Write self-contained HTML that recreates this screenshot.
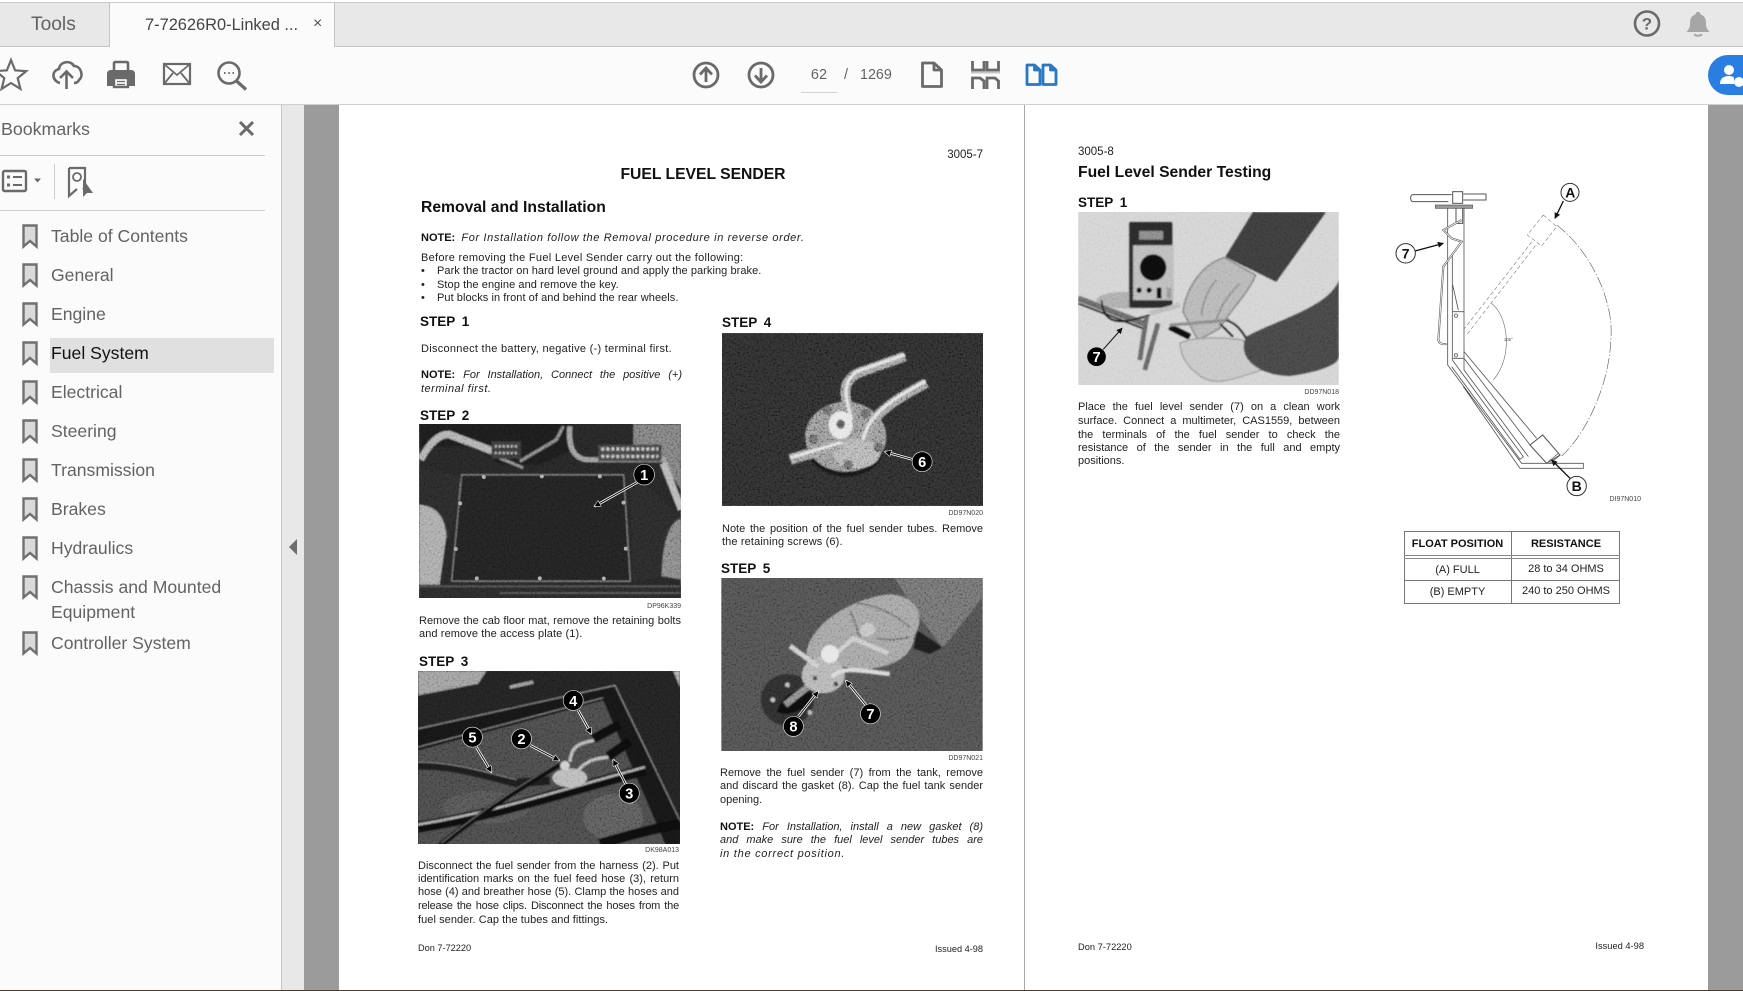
<!DOCTYPE html>
<html><head><meta charset="utf-8"><style>
html,body{margin:0;padding:0;background:#fff}
#r{position:relative;width:1743px;height:991px;overflow:hidden;background:#fff;font-family:"Liberation Sans",sans-serif}
.a{position:absolute}
.u{position:absolute;white-space:nowrap;font-family:"Liberation Sans",sans-serif;color:#636363;line-height:24px;font-size:17.6px}
.t{position:absolute;white-space:nowrap;font-size:11px;line-height:14px;color:#222;margin-top:1px}
.j{text-align:justify;text-align-last:justify;white-space:normal}
.r{text-align:right}
.h{font-weight:bold;color:#111;font-size:15.7px;line-height:20px}
.s{font-weight:bold;color:#111;font-size:13.5px;line-height:16px;word-spacing:3px}
.t.l{font-size:7px;line-height:9px;color:#444;text-align:right;margin-top:0}
.i{font-style:italic}
b{color:#111}
svg{position:absolute;overflow:visible}
svg.ph{overflow:hidden}
svg text{font-family:"Liberation Sans",sans-serif}
.c{font-size:44px;font-weight:bold;fill:#fff;text-anchor:middle}
</style></head><body><div id="r">

<svg width="0" height="0" style="left:0;top:0"><defs>
<filter id="n" x="0" y="0" width="100%" height="100%"><feTurbulence type="fractalNoise" baseFrequency=".18" numOctaves="2" seed="4"/><feColorMatrix values="1.6 1.6 0 0 -1.1 1.6 1.6 0 0 -1.1 1.6 1.6 0 0 -1.1 0 0 0 0 1"/></filter>
<filter id="b"><feGaussianBlur stdDeviation="2.500"/></filter>
<marker id="m" viewBox="0 0 10 10" refX="9" refY="5" markerWidth="26" markerHeight="20" markerUnits="userSpaceOnUse" orient="auto"><path d="M0,0L10,5L0,10z" fill="#000" stroke="#fff" stroke-width=".8"/></marker>
<marker id="k" viewBox="0 0 10 10" refX="9" refY="5" markerWidth="26" markerHeight="18" markerUnits="userSpaceOnUse" orient="auto"><path d="M0,0L10,5L0,10z" fill="#111"/></marker>
</defs></svg>

<!-- top chrome -->
<div class="a" style="left:0;top:2px;width:1743px;height:45px;background:#e8e8e8;border-top:1px solid #c9c9c9;box-sizing:border-box;border-bottom:1px solid #c4c4c4"></div>
<div class="a" style="left:109px;top:3px;width:226px;height:44px;background:#fbfbfb;border-left:1px solid #c4c4c4;border-right:1px solid #c4c4c4;box-sizing:border-box"></div>
<div class="u" style="left:31px;top:13px;font-size:19.200px">Tools</div>
<div class="u" style="left:145px;top:13px;font-size:16.400px;color:#444">7-72626R0-Linked ...</div>
<div class="u" style="left:313px;top:12px;font-size:16px;color:#555">×</div>
<div class="a" style="left:0;top:47px;width:1743px;height:57px;background:#fbfbfb"></div>
<div class="a" style="left:0;top:104px;width:1743px;height:1px;background:#cfcfcf"></div>

<svg style="left:0;top:0" width="1743" height="104" fill="none" stroke="#6a6a6a" stroke-width="2.2">
<path d="M11,60L15.1,70.3L26.2,71.1L17.7,78.2L20.4,88.9L11,83L1.6,88.9L4.3,78.2L-4.2,71.1L6.9,70.3Z"/>
<path d="M60,83C52,81 51,71 59,69C60,61 71,60 74,66C81,66 84,76 79,80C78,82 76,83 74,83" stroke-width="2.6"/>
<path d="M66.500,89V72M60,78L66.500,71.500L73,78" stroke-width="2.6"/>
<path d="M114,71V63.500q0-1.500 1.500-1.500h11q1.500 0 1.500 1.500V71" stroke-width="2.6"/>
<path d="M107,74q0-4 4-4h20q4 0 4 4v12h-6V78h-16v8h-6z" fill="#6a6a6a" stroke="none"/>
<rect x="114" y="78" width="14" height="9" fill="#fbfbfb" stroke-width="2.400"/>
<path d="M117,81.500h8M117,84.500h8" stroke-width="1.200"/>
<rect x="164" y="64" width="26" height="20" stroke-width="2.200"/>
<path d="M164,64L177,75L190,64M164,84L173,73M190,84L181,73" stroke-width="1.800"/>
<circle cx="229" cy="73" r="10.500" stroke-width="2.600"/>
<path d="M236.500,81L246,89.500" stroke-width="3.200"/>
<path d="M224,73h1.500M228.300,73h1.500M232.500,73h1.500" stroke-width="2"/>
<circle cx="706" cy="75" r="12" stroke-width="2.800"/>
<path d="M706,82V68.500M700,74.500L706,68L712,74.500" stroke-width="2.800"/>
<circle cx="761" cy="75" r="12" stroke-width="2.800"/>
<path d="M761,68V81.500M755,75.500L761,82L767,75.500" stroke-width="2.800"/>
<path d="M922.500,63H934L941.500,70V86.500H922.500Z M934,63V70H941.500" stroke-width="2.800" stroke-linejoin="round"/>
<path d="M972.500,61V70H984V61M987,61V70H998.500V61" stroke-width="2.800"/>
<path d="M971,72.500H1000" stroke="#c5c5c5" stroke-width="2"/>
<path d="M972.500,89V78H980L984,81V89M987,89V78H995L998.500,81V89" stroke-width="2.800"/>
<path d="M1027,65H1034.500L1040,70V84.500H1027ZM1034.500,65V70H1040M1043,65H1050.500L1056,70V84.500H1043ZM1050.500,65V70H1056" stroke="#2a77c4" stroke-width="2.800" stroke-linejoin="round"/>
<circle cx="1647" cy="23.500" r="12" stroke-width="2.600"/>
<text x="1647" y="29.500" text-anchor="middle" font-size="17" font-weight="bold" fill="#6a6a6a" stroke="none">?</text>
<path d="M1698,12c1.500,0 2.500,1 2.500,2.500c5,1.500 5.500,5.500 5.500,10c0,3.500 2,5.500 3.500,7.500h-23c1.500-2 3.500-4 3.500-7.500c0-4.500 .5-8.500 5.500-10c0-1.500 1-2.500 2.500-2.500z" fill="#a6a6a6" stroke="none"/>
<path d="M1694,34.500q4,2.500 8,0" stroke="#a6a6a6" stroke-width="2"/>
</svg>

<div class="u" style="left:801px;top:63px;width:36px;text-align:center;font-size:14.500px">62</div>
<div class="a" style="left:801px;top:92px;width:36px;height:1px;background:#d2d2d2"></div>
<div class="u" style="left:844px;top:63px;font-size:14.500px">/</div>
<div class="u" style="left:860px;top:63px;font-size:14.300px">1269</div>

<div class="a" style="left:1708px;top:55px;width:60px;height:40px;border-radius:20px;background:#2a7de1"></div>
<svg style="left:1708px;top:55px" width="35" height="40" fill="#fff"><circle cx="21" cy="15" r="5"/><path d="M12,29c0-6 4-8 9-8c2,0 4,.5 5,1.500l0,6.500z"/><circle cx="31" cy="27" r="5"/></svg>

<!-- sidebar -->
<div class="a" style="left:0;top:105px;width:281px;height:885px;background:#fbfbfb"></div>
<div class="a" style="left:281px;top:105px;width:1px;height:885px;background:#c6c6c6"></div>
<div class="a" style="left:282px;top:105px;width:22px;height:885px;background:#e8e8e8"></div>
<div class="a" style="left:304px;top:105px;width:35px;height:885px;background:#9b9b9b"></div>
<div class="a" style="left:1708px;top:105px;width:35px;height:885px;background:#9b9b9b"></div>
<div class="a" style="left:1024px;top:105px;width:1px;height:885px;background:#a8a8a8"></div>
<div class="a" style="left:0;top:990px;width:1743px;height:1px;background:#4a3a2a"></div>

<div class="u" style="left:1px;top:117px;font-size:17.800px">Bookmarks</div>
<svg style="left:0;top:105px" width="281" height="120" fill="none" stroke="#6a6a6a">
<path d="M240,17L253,30M253,17L240,30" stroke-width="3"/>
<path d="M0,50.500H265M0,105.500H265" stroke="#cdcdcd" stroke-width="1"/>
<rect x="3" y="66" width="23" height="20" rx="1.500" stroke-width="2.400"/>
<path d="M7,72h3M7,80h3" stroke-width="3"/><path d="M13,72h9M13,80h9" stroke-width="2"/>
<path d="M34,73.500h7l-3.500,4z" fill="#6a6a6a" stroke="none"/>
<path d="M54.500,59V94" stroke="#cdcdcd"/>
<path d="M69,63H85V85L83,83M69,63V91L77,84" stroke-width="2.200"/>
<circle cx="77" cy="72" r="4" stroke-width="1.800"/>
<path d="M83,74L83,92L87,88L93,88Z" fill="#6a6a6a" stroke="none"/>
</svg>
<svg style="left:289px;top:539px" width="9" height="16"><path d="M8,0V16L0,8Z" fill="#6e6e6e"/></svg>

<div class="a" style="left:50px;top:338px;width:224px;height:35px;background:#e0e0e0"></div>
<svg style="left:0;top:210px" width="50" height="460">
<defs><path id="bk" d="M23.500,15.500H36.500V36.500L30,31L23.500,36.500Z" fill="#dadada" stroke="#707070" stroke-width="2.400" stroke-linejoin="miter"/></defs>
<use href="#bk" y="0"/><use href="#bk" y="39"/><use href="#bk" y="78"/><use href="#bk" y="117"/><use href="#bk" y="156"/><use href="#bk" y="195"/><use href="#bk" y="234"/><use href="#bk" y="273"/><use href="#bk" y="312"/><use href="#bk" y="351"/><use href="#bk" y="407"/>
</svg>
<div class="u" style="left:51px;top:224px">Table of Contents</div>
<div class="u" style="left:51px;top:263px">General</div>
<div class="u" style="left:51px;top:302px">Engine</div>
<div class="u" style="left:51px;top:341px;color:#111">Fuel System</div>
<div class="u" style="left:51px;top:380px">Electrical</div>
<div class="u" style="left:51px;top:419px">Steering</div>
<div class="u" style="left:51px;top:458px">Transmission</div>
<div class="u" style="left:51px;top:497px">Brakes</div>
<div class="u" style="left:51px;top:536px">Hydraulics</div>
<div class="u" style="left:51px;top:575px">Chassis and Mounted</div>
<div class="u" style="left:51px;top:600px">Equipment</div>
<div class="u" style="left:51px;top:631px">Controller System</div>

<!-- LEFT PAGE -->
<div class="t r" style="left:883px;width:100px;top:147px;font-size:11.500px">3005-7</div>
<div class="t h" style="left:602px;width:202px;text-align:center;top:164px">FUEL LEVEL SENDER</div>
<div class="t h" style="left:421px;top:197px">Removal and Installation</div>
<div class="t" style="left:421px;top:230px"><b>NOTE:</b>&nbsp; <span class="i" style="letter-spacing:.63px">For Installation follow the Removal procedure in reverse order.</span></div>
<div class="t" style="left:421px;top:250px;letter-spacing:.29px">Before removing the Fuel Level Sender carry out the following:</div>
<div class="t" style="left:421px;top:263px">•</div><div class="t" style="left:437px;top:263px;letter-spacing:.06px">Park the tractor on hard level ground and apply the parking brake.</div>
<div class="t" style="left:421px;top:277px">•</div><div class="t" style="left:437px;top:277px;letter-spacing:.08px">Stop the engine and remove the key.</div>
<div class="t" style="left:421px;top:290px">•</div><div class="t" style="left:437px;top:290px;letter-spacing:.06px">Put blocks in front of and behind the rear wheels.</div>
<div class="t s" style="left:420px;top:313px">STEP 1</div>
<div class="t" style="left:421px;top:341px;letter-spacing:.28px">Disconnect the battery, negative (-) terminal first.</div>
<div class="t j" style="left:421px;width:261px;top:367px"><b>NOTE:</b> <span class="i">For Installation, Connect the positive (+)</span></div>
<div class="t i" style="left:421px;top:381px;letter-spacing:.5px">terminal first.</div>
<div class="t s" style="left:420px;top:407px">STEP 2</div>

<svg class="ph" style="left:419px;top:424px" width="262" height="174" viewBox="58 73 785 522">
<rect x="58" y="73" width="785" height="522" fill="#262626"/>
<g filter="url(#b)">
<polygon points="700,73 843,73 843,270 780,175 700,170" fill="#7c7c7c"/>
<path d="M58,70H520V150L420,195H300L220,140H60Z" fill="#1a1a1a"/>
<polygon points="690,210 840,350 800,400 785,530 700,545" fill="#2a2a2a"/>
<polygon points="185,225 672,225 692,545 155,545" fill="#232323" stroke="#a0a0a0" stroke-width="2.500"/>
<polygon points="58,200 185,230 150,420 58,320" fill="#2b2b2b"/>
<path d="M62,180C90,130 120,100 150,105L280,155" fill="none" stroke="#b0b0b0" stroke-width="22"/>
<path d="M790,190L845,330" fill="none" stroke="#b5b5b5" stroke-width="22"/>
<path d="M510,80C505,140 520,175 560,180H800" fill="none" stroke="#9a9a9a" stroke-width="16"/>
<path d="M360,185L470,120L490,80M300,175L370,205" fill="none" stroke="#888" stroke-width="9"/>
<rect x="275" y="125" width="88" height="52" fill="#3a3a3a"/>
<rect x="595" y="135" width="190" height="50" fill="#444"/>
<path d="M285,140h70M285,160h70" stroke="#bbb" stroke-width="7" stroke-dasharray="6 6"/>
<path d="M605,148h170M605,170h170" stroke="#ccc" stroke-width="9" stroke-dasharray="8 7"/>
<path d="M58,315C110,320 135,350 140,410L120,555H58Z" fill="#a8a8a8"/>
<path d="M843,355C805,375 790,420 785,530L843,540Z" fill="#858585"/>
<rect x="58" y="555" width="785" height="40" fill="#2c2c2c"/>
<path d="M58,560H840M300,580H840" stroke="#666" stroke-width="3"/>
</g>
<g fill="#aaa"><circle cx="252" cy="232" r="6"/><circle cx="426" cy="230" r="6"/><circle cx="600" cy="230" r="6"/><circle cx="181" cy="311" r="6"/><circle cx="671" cy="309" r="6"/><circle cx="168" cy="448" r="6"/><circle cx="678" cy="447" r="6"/><circle cx="231" cy="536" r="6"/><circle cx="420" cy="536" r="6"/><circle cx="612" cy="537" r="6"/></g>
<rect x="58" y="73" width="785" height="522" filter="url(#n)" opacity=".2" style="mix-blend-mode:overlay"/>
<path d="M712,248L584,320" stroke="#fff" stroke-width="8"/><path d="M712,248L584,320" stroke="#111" stroke-width="3" marker-end="url(#m)"/>
<circle cx="733" cy="225" r="31" fill="#000" stroke="#ddd" stroke-width="2"/><text class="c" x="733" y="241">1</text>
</svg>
<div class="t l" style="left:581px;width:100px;top:602px">DP96K339</div>
<div class="t j" style="left:419px;width:262px;top:613px">Remove the cab floor mat, remove the retaining bolts</div>
<div class="t" style="left:419px;top:626px;letter-spacing:.1px">and remove the access plate (1).</div>
<div class="t s" style="left:419px;top:653px">STEP 3</div>

<svg class="ph" style="left:418px;top:671px" width="262" height="173" viewBox="55 62 785 518">
<rect x="55" y="62" width="785" height="518" fill="#1e1e1e"/>
<g filter="url(#b)">
<polygon points="55,62 265,62 235,100 55,135" fill="#9c9c9c"/>
<polygon points="260,62 840,62 840,500 645,105 55,235 55,135 235,100" fill="#242424"/>
<path d="M330,110L400,95M430,160L480,145" stroke="#999" stroke-width="10"/>
<polygon points="820,62 840,62 840,110" fill="#aaa"/>
<polygon points="55,300 610,150 840,590 55,590" fill="#484848"/>
<polygon points="55,235 645,105 840,510 840,590 800,590 610,150 55,300" fill="#141414"/>
<path d="M55,235L645,105L840,510M55,290L610,142" fill="none" stroke="#999" stroke-width="2.500"/>
<ellipse cx="640" cy="500" rx="90" ry="70" fill="#5a5a5a"/>
<ellipse cx="260" cy="470" rx="130" ry="50" fill="#525252"/>
<path d="M55,345C150,340 260,375 350,397L450,390" fill="none" stroke="#1c1c1c" stroke-width="26"/>
<path d="M55,335C150,332 260,365 350,387" fill="none" stroke="#888" stroke-width="3"/>
<path d="M55,530C300,490 500,420 735,358" fill="none" stroke="#111" stroke-width="34"/>
<path d="M55,522C300,482 500,412 735,350" fill="none" stroke="#aaa" stroke-width="7"/>
<path d="M600,580C700,550 780,530 840,520" stroke="#111" stroke-width="30" fill="none"/>
<path d="M120,585C250,480 380,400 490,335" fill="none" stroke="#0c0c0c" stroke-width="17"/>
<path d="M125,578C250,474 380,394 485,330" fill="none" stroke="#888" stroke-width="2"/>
<ellipse cx="510" cy="382" rx="52" ry="28" fill="#b8b8b8"/>
<circle cx="495" cy="345" r="14" fill="#ccc"/>
<path d="M510,335C515,280 540,280 600,265" fill="none" stroke="#bbb" stroke-width="9"/>
<path d="M530,365C560,330 580,325 625,320" fill="none" stroke="#bbb" stroke-width="9"/>
<path d="M580,265L660,222" fill="none" stroke="#111" stroke-width="28"/>
<path d="M625,318L690,272" fill="none" stroke="#111" stroke-width="28"/>
</g>
<rect x="55" y="62" width="785" height="518" filter="url(#n)" opacity=".2" style="mix-blend-mode:overlay"/>
<g stroke-width="8" stroke="#fff"><path d="M535,180L574,250"/><path d="M230,290L275,365"/><path d="M392,285L478,330"/><path d="M678,402L640,328"/></g>
<g stroke-width="3" stroke="#111"><path d="M535,180L574,250" marker-end="url(#m)"/><path d="M230,290L275,365" marker-end="url(#m)"/><path d="M392,285L478,330" marker-end="url(#m)"/><path d="M678,402L640,328" marker-end="url(#m)"/></g>
<g fill="#000" stroke="#ddd" stroke-width="2"><circle cx="520" cy="150" r="30"/><circle cx="218" cy="260" r="30"/><circle cx="365" cy="265" r="30"/><circle cx="688" cy="428" r="30"/></g>
<text class="c" x="520" y="166">4</text><text class="c" x="218" y="276">5</text><text class="c" x="365" y="281">2</text><text class="c" x="688" y="444">3</text>
</svg>
<div class="t l" style="left:579px;width:100px;top:846px">DK98A013</div>
<div class="t j" style="left:418px;width:261px;top:858px">Disconnect the fuel sender from the harness (2). Put</div>
<div class="t j" style="left:418px;width:261px;top:871px">identification marks on the fuel feed hose (3), return</div>
<div class="t j" style="left:418px;width:261px;top:884px">hose (4) and breather hose (5). Clamp the hoses and</div>
<div class="t j" style="left:418px;width:261px;top:898px;letter-spacing:-.2px">release the hose clips. Disconnect the hoses from the</div>
<div class="t" style="left:418px;top:912px;letter-spacing:.06px">fuel sender. Cap the tubes and fittings.</div>
<div class="t" style="left:418px;top:940px;font-size:9.200px">Don 7-72220</div>
<div class="t r" style="left:883px;width:100px;top:941px;font-size:9.200px">Issued 4-98</div>

<div class="t s" style="left:722px;top:314px">STEP 4</div>
<svg class="ph" style="left:722px;top:333px" width="261" height="173" viewBox="35 38 785 520">
<rect x="35" y="38" width="785" height="520" fill="#2c2c2c"/>
<g filter="url(#b)">
<ellipse cx="407" cy="375" rx="118" ry="95" fill="#161616"/>
<ellipse cx="407" cy="350" rx="122" ry="105" fill="#8e8e8e"/>
<ellipse cx="440" cy="400" rx="70" ry="45" fill="#aeaeae"/>
<g fill="#666"><circle cx="352" cy="270" r="15"/><circle cx="466" cy="280" r="15"/><circle cx="310" cy="358" r="15"/><circle cx="505" cy="382" r="15"/><circle cx="415" cy="434" r="15"/></g>
<path d="M425,300C400,220 395,190 440,160L585,108" fill="none" stroke="#999" stroke-width="30"/>
<path d="M425,300C403,220 398,188 440,154L585,103" fill="none" stroke="#e2e2e2" stroke-width="9"/>
<path d="M460,365C480,300 510,260 650,188" fill="none" stroke="#999" stroke-width="30"/>
<path d="M458,360C478,295 510,254 648,183" fill="none" stroke="#e2e2e2" stroke-width="9"/>
<path d="M240,418L395,372" fill="none" stroke="#999" stroke-width="32"/>
<path d="M240,413L395,367" fill="none" stroke="#e2e2e2" stroke-width="9"/>
<ellipse cx="392" cy="315" rx="36" ry="42" fill="#e4e4e4"/>
<ellipse cx="392" cy="312" rx="13" ry="14" fill="#555"/>
</g>
<rect x="35" y="38" width="785" height="520" filter="url(#n)" opacity=".35" style="mix-blend-mode:overlay"/>
<path d="M607,418L525,395" stroke="#fff" stroke-width="8"/><path d="M607,418L525,395" stroke="#111" stroke-width="3" marker-end="url(#m)"/>
<circle cx="637" cy="425" r="30" fill="#000" stroke="#ddd" stroke-width="2"/><text class="c" x="637" y="441">6</text>
</svg>
<div class="t l" style="left:883px;width:100px;top:509px">DD97N020</div>
<div class="t j" style="left:722px;width:261px;top:521px">Note the position of the fuel sender tubes. Remove</div>
<div class="t" style="left:722px;top:534px;letter-spacing:.13px">the retaining screws (6).</div>
<div class="t s" style="left:721px;top:560px">STEP 5</div>

<svg class="ph" style="left:721px;top:578px" width="262" height="173" viewBox="33 53 787 521">
<rect x="33" y="53" width="787" height="521" fill="#505050"/>
<g filter="url(#b)">
<polygon points="555,53 820,53 820,110 700,265 615,150" fill="#707070"/>
<polygon points="622,210 700,262 660,282 612,265" fill="#1b1b1b"/>
<path d="M290,270C310,190 420,115 540,102C620,105 650,170 615,225C610,285 560,325 440,330L290,290Z" fill="#a2a2a2"/>
<path d="M450,210C465,170 500,190 495,215C480,235 455,235 450,210Z" fill="#c4c4c4"/>
<path d="M420,150C440,190 440,210 450,230M500,235C530,240 570,240 600,230M440,130C480,130 540,150 600,200" fill="none" stroke="#6a6a6a" stroke-width="5"/>
<ellipse cx="232" cy="420" rx="80" ry="78" fill="#2e2e2e"/>
<path d="M200,455C220,400 260,380 310,400L290,440C260,460 220,470 200,455Z" fill="#0d0d0d"/>
<path d="M225,435L300,375" stroke="#8a8a8a" stroke-width="20"/>
<ellipse cx="340" cy="345" rx="65" ry="55" fill="#b4b4b4"/>
<path d="M240,258L325,320" fill="none" stroke="#ccc" stroke-width="15"/>
<path d="M385,275L430,235L535,280" fill="none" stroke="#ccc" stroke-width="13"/>
<path d="M365,350C400,320 440,330 540,342" fill="none" stroke="#d8d8d8" stroke-width="13"/>
<ellipse cx="360" cy="282" rx="27" ry="27" fill="#e6e6e6"/>
<g fill="#444"><circle cx="315" cy="355" r="7"/><circle cx="378" cy="372" r="7"/></g>
<g fill="#bbb"><circle cx="232" cy="375" r="7"/><circle cx="188" cy="420" r="7"/><circle cx="300" cy="458" r="7"/></g>
</g>
<rect x="33" y="53" width="787" height="521" filter="url(#n)" opacity=".2" style="mix-blend-mode:overlay"/>
<path d="M468,435L408,362" stroke="#fff" stroke-width="8"/><path d="M468,435L408,362" stroke="#111" stroke-width="3" marker-end="url(#m)"/>
<path d="M265,470L325,394" stroke="#fff" stroke-width="8"/><path d="M265,470L325,394" stroke="#111" stroke-width="3" marker-end="url(#m)"/>
<circle cx="482" cy="462" r="30" fill="#000" stroke="#ddd" stroke-width="2"/><text class="c" x="482" y="478">7</text>
<circle cx="250" cy="500" r="30" fill="#000" stroke="#ddd" stroke-width="2"/><text class="c" x="250" y="516">8</text>
</svg>
<div class="t l" style="left:883px;width:100px;top:754px">DD97N021</div>
<div class="t j" style="left:720px;width:263px;top:765px">Remove the fuel sender (7) from the tank, remove</div>
<div class="t j" style="left:720px;width:263px;top:778px">and discard the gasket (8). Cap the fuel tank sender</div>
<div class="t" style="left:720px;top:792px">opening.</div>
<div class="t j" style="left:720px;width:263px;top:819px"><b>NOTE:</b> <span class="i">For Installation, install a new gasket (8)</span></div>
<div class="t j i" style="left:720px;width:263px;top:832px">and make sure the fuel level sender tubes are</div>
<div class="t i" style="left:720px;top:846px;letter-spacing:.73px">in the correct position.</div>

<!-- RIGHT PAGE -->
<div class="t" style="left:1078px;top:144px;font-size:11.500px">3005-8</div>
<div class="t h" style="left:1078px;top:162px">Fuel Level Sender Testing</div>
<div class="t s" style="left:1078px;top:194px">STEP 1</div>
<svg class="ph" style="left:1078px;top:212px" width="261" height="173" viewBox="25 35 783 520">
<rect x="25" y="35" width="783" height="520" fill="#d4d4d4"/>
<g filter="url(#b)">
<ellipse cx="170" cy="300" rx="90" ry="25" fill="#aeaeae"/>
<rect x="178" y="65" width="130" height="258" rx="5" fill="#2b2b2b"/>
<rect x="208" y="92" width="72" height="26" fill="#8a8a8a"/>
<rect x="190" y="135" width="122" height="165" fill="#bdbdbd"/>
<circle cx="250" cy="202" r="40" fill="#0e0e0e"/>
<circle cx="208" cy="270" r="8" fill="#111"/><circle cx="238" cy="270" r="8" fill="#111"/>
<path d="M268,262V295" stroke="#111" stroke-width="14"/><path d="M298,262V295" stroke="#999" stroke-width="14"/>
<polygon points="550,35 770,35 620,245 467,170" fill="#3c3c3c"/>
<path d="M340,335C350,260 400,190 465,172L558,225C530,290 480,330 450,385L385,420Z" fill="#b8b8b8" stroke="#777" stroke-width="4"/>
<path d="M395,345C400,300 420,260 440,240M440,360C450,320 480,280 510,250" fill="none" stroke="#888" stroke-width="5"/>
<path d="M330,430C370,410 450,410 520,420L575,510C500,535 440,560 395,530C350,500 335,470 330,430Z" fill="#c8c8c8" stroke="#888" stroke-width="3"/>
<path d="M808,240C780,320 620,360 530,410C500,470 560,525 660,528C720,520 808,500 808,470Z" fill="#474747"/>
<path d="M25,295L220,370" stroke="#6a6a6a" stroke-width="18"/>
<path d="M25,310L220,385" stroke="#222" stroke-width="5"/>
<path d="M95,300C100,380 160,370 240,345" fill="none" stroke="#111" stroke-width="5"/>
<path d="M230,350L210,480M265,370L225,510" stroke="#666" stroke-width="14"/>
<path d="M240,340L330,315" stroke="#bbb" stroke-width="14"/>
<path d="M300,380L360,410" stroke="#111" stroke-width="18"/>
<path d="M300,375L480,360" stroke="#888" stroke-width="9"/>
<path d="M470,360C500,370 515,390 530,415M450,370L490,410" stroke="#111" fill="none" stroke-width="5"/>
</g>
<rect x="25" y="35" width="783" height="520" filter="url(#n)" opacity=".12" style="mix-blend-mode:overlay"/>
<path d="M100,448L157,384" stroke="#111" stroke-width="3" marker-end="url(#k)"/>
<circle cx="80" cy="470" r="28" fill="#000"/><text class="c" x="80" y="486">7</text>
</svg>
<div class="t l" style="left:1239px;width:100px;top:388px">DD97N018</div>
<div class="t j" style="left:1078px;width:262px;top:399px">Place the fuel level sender (7) on a clean work</div>
<div class="t j" style="left:1078px;width:262px;top:413px">surface. Connect a multimeter, CAS1559, between</div>
<div class="t j" style="left:1078px;width:262px;top:427px">the terminals of the fuel sender to check the</div>
<div class="t j" style="left:1078px;width:262px;top:440px">resistance of the sender in the full and empty</div>
<div class="t" style="left:1078px;top:453px">positions.</div>

<svg style="left:1380px;top:170px" width="280" height="340" viewBox="0 0 840 1020" fill="none" stroke="#555" stroke-width="2.500">
<path d="M205,95H100Q92,95 92,84Q92,74 100,74H215M250,72H318V90H250" stroke-width="3"/>
<rect x="218" y="65" width="30" height="35" fill="#fff" stroke-width="3"/>
<rect x="166" y="105" width="112" height="10" fill="#999" stroke-width="2"/>
<path d="M203,115V585L425,880H610V895H420L250,650M252,115V600L445,860" stroke-width="2.500"/>
<path d="M217,250V570L430,860L420,868L215,590" stroke-width="2.500"/>
<path d="M228,115V160M248,115V160H228" stroke-width="3"/>
<path d="M245,150L190,180L215,205L245,215L190,290L175,510Q178,525 200,522" stroke-width="6" stroke="#555"/>
<path d="M245,150L190,180L215,205L245,215L190,290L175,510Q178,525 200,522" stroke-width="2.500" stroke="#fff"/>
<path d="M218,345L235,420M218,425H252M218,565H252"/>
<circle cx="228" cy="437" r="5"/><circle cx="228" cy="556" r="5"/>
<path d="M252,545L470,805M252,565L450,825" stroke-width="2.500"/>
<polygon points="450,825 488,795 540,855 500,880" fill="#fff" stroke-width="3"/>
<path d="M505,875L535,850M510,880L540,856" stroke-width="2"/>
<g stroke-dasharray="12 7" stroke="#888" stroke-width="2"><path d="M250,480L460,210"/><path d="M262,492L470,222"/><polygon points="490,135 530,170 485,228 442,195"/></g>
<path d="M530,165C640,250 700,400 693,500C690,640 620,790 545,858" stroke-dasharray="34 6 4 6" stroke="#666" stroke-width="2"/>
<path d="M335,400C385,440 400,560 340,630" stroke="#777" stroke-width="2"/>
<text x="385" y="513" font-size="13" text-anchor="middle" fill="#555" stroke="none">105°</text>
<path d="M550,93L525,145" stroke="#111" stroke-width="4" marker-end="url(#k)"/>
<path d="M105,243L190,220" stroke="#111" stroke-width="4" marker-end="url(#k)"/>
<path d="M570,925L515,870" stroke="#111" stroke-width="4" marker-end="url(#k)"/>
<g fill="#fff" stroke="#333" stroke-width="3"><circle cx="570" cy="67" r="27"/><circle cx="77" cy="250" r="29"/><circle cx="590" cy="948" r="29"/></g>
<g font-size="42" font-weight="bold" fill="#111" stroke="none" text-anchor="middle"><text x="571" y="82">A</text><text x="77" y="265">7</text><text x="590" y="963">B</text></g>
</svg>
<div class="t l" style="left:1541px;width:100px;top:495px">DI97N010</div>

<div class="a" style="left:1404px;top:531px;width:216px;height:73px;border:1px solid #777;box-sizing:border-box"></div>
<div class="a" style="left:1511px;top:531px;width:1px;height:73px;background:#777"></div>
<div class="a" style="left:1404px;top:555px;width:216px;height:1px;background:#888"></div>
<div class="a" style="left:1404px;top:558px;width:216px;height:1px;background:#888"></div>
<div class="a" style="left:1404px;top:580px;width:216px;height:1px;background:#777"></div>
<div class="t" style="left:1404px;width:107px;top:536px;text-align:center;font-weight:bold;color:#111">FLOAT POSITION</div>
<div class="t" style="left:1512px;width:108px;top:536px;text-align:center;font-weight:bold;color:#111">RESISTANCE</div>
<div class="t" style="left:1404px;width:107px;top:562px;text-align:center">(A) FULL</div>
<div class="t" style="left:1512px;width:108px;top:561px;text-align:center">28 to 34 OHMS</div>
<div class="t" style="left:1404px;width:107px;top:584px;text-align:center">(B) EMPTY</div>
<div class="t" style="left:1512px;width:108px;top:583px;text-align:center">240 to 250 OHMS</div>

<div class="t" style="left:1078px;top:939px;font-size:9.300px">Don 7-72220</div>
<div class="t r" style="left:1544px;width:100px;top:938px;font-size:9.300px">Issued 4-98</div>
</div></body></html>
